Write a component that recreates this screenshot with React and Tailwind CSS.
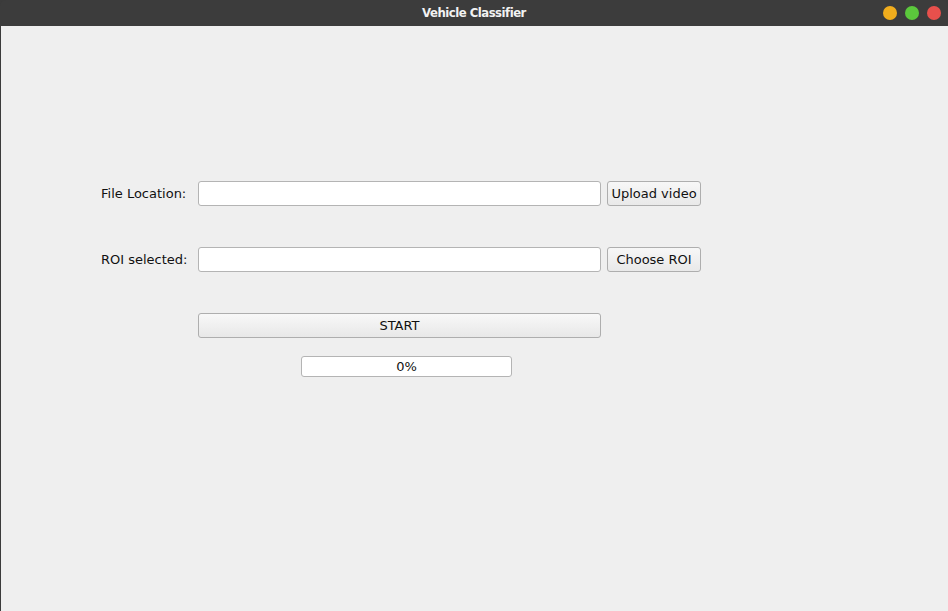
export default function App() {
  const font = { fontFamily: '"DejaVu Sans", sans-serif' }
  return (
    <div className="w-[948px] h-[611px] flex flex-col bg-[#3b3b3b] overflow-hidden">
      {/* title bar */}
      <div className="h-[26px] shrink-0 relative flex items-center justify-center rounded-t-[6px] bg-[#3c3c3c]">
        <span
          className="text-[13px] font-bold text-[#f2f2f2] tracking-[-0.5px] [font-stretch:condensed]"
          style={{ fontFamily: '"DejaVu Sans Condensed", "DejaVu Sans", sans-serif' }}
        >
          Vehicle Classifier
        </span>
        <div className="absolute right-[7px] top-[6px] flex gap-[8px]">
          <span className="w-[14px] h-[14px] rounded-full bg-[#f1ad1d]" />
          <span className="w-[14px] h-[14px] rounded-full bg-[#5bc83c]" />
          <span className="w-[14px] h-[14px] rounded-full bg-[#e8504c]" />
        </div>
      </div>

      {/* body */}
      <div className="flex-1 ml-[1px] bg-[#efefef] pt-[155px] pl-[100px] text-[13px] text-[#111]" style={font}>
        <div className="grid grid-cols-[97px_403px_100px]">
          <div className="h-[25px] flex items-center">File Location:</div>
          <div className="h-[25px] bg-white border border-[#b4b4b4] rounded-[3px]" />
          <button className="ml-[6px] h-[25px] border border-[#aeaeae] rounded-[3px] bg-gradient-to-b from-[#f7f7f7] to-[#e9e9e9] flex items-center justify-center">
            Upload video
          </button>
        </div>

        <div className="grid grid-cols-[97px_403px_100px] mt-[41px]">
          <div className="h-[25px] flex items-center">ROI selected:</div>
          <div className="h-[25px] bg-white border border-[#b4b4b4] rounded-[3px]" />
          <button className="ml-[6px] h-[25px] border border-[#aeaeae] rounded-[3px] bg-gradient-to-b from-[#f7f7f7] to-[#e9e9e9] flex items-center justify-center">
            Choose ROI
          </button>
        </div>

        <div className="ml-[97px] mt-[41px] w-[403px]">
          <button className="w-[403px] h-[25px] border border-[#aeaeae] rounded-[3px] bg-gradient-to-b from-[#f8f8f8] to-[#e8e8e8] flex items-center justify-center">
            START
          </button>
          <div className="ml-[103px] mt-[18px] w-[211px] h-[21px] bg-white border border-[#b4b4b4] rounded-[3px] flex items-center justify-center">
            0%
          </div>
        </div>
      </div>
    </div>
  )
}
